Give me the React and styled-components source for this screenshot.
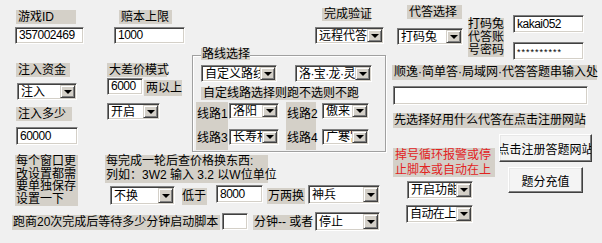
import React from "react";
import styled, { createGlobalStyle } from "styled-components";

const GlobalStyle = createGlobalStyle`
  body { margin: 0; background: #f0f0f0; }
  * { box-sizing: border-box; }
`;

const Window = styled.div`
  width: 602px;
  height: 243px;
  overflow: hidden;
  display: flex;
  background: #f0f0f0;
  font-family: "Liberation Sans", "Noto Sans CJK SC", sans-serif;
  font-size: 12px;
  color: #000;
`;

const LeftArea = styled.div`
  width: 390px;
  flex-shrink: 0;
  display: flex;
  flex-direction: column;
`;

const RightArea = styled.div`
  flex: 1;
  display: flex;
  flex-direction: column;
  align-items: flex-start;
`;

const Row = styled.div`
  display: flex;
  align-items: flex-start;
  flex-shrink: 0;
  margin-top: ${(p) => p.$mt || 0}px;
  margin-left: ${(p) => p.$ml || 0}px;
  height: ${(p) => (p.$h ? p.$h + "px" : "auto")};
`;

const Col = styled.div`
  display: flex;
  flex-direction: column;
  align-items: flex-start;
  flex-shrink: 0;
  margin-top: ${(p) => p.$mt || 0}px;
  margin-left: ${(p) => p.$ml || 0}px;
  width: ${(p) => (p.$w ? p.$w + "px" : "auto")};
`;

const Label = styled.div`
  flex-shrink: 0;
  background: #d4d0c8;
  width: ${(p) => p.$w}px;
  height: ${(p) => p.$h || 14}px;
  line-height: ${(p) => p.$lh || p.$h || 14}px;
  margin-top: ${(p) => p.$mt || 0}px;
  margin-left: ${(p) => p.$ml || 0}px;
  padding-left: ${(p) => (p.$pl === undefined ? 2 : p.$pl)}px;
  white-space: pre;
  color: ${(p) => (p.$red ? "#e2231f" : "#000")};
`;

const sunken = `
  border-top: 1px solid #808080;
  border-left: 1px solid #808080;
  border-bottom: 1px solid #ffffff;
  border-right: 1px solid #ffffff;
  box-shadow: inset 1px 1px 0 #404040, inset -1px -1px 0 #d4d0c8;
`;

const TextBox = styled.div`
  flex-shrink: 0;
  ${sunken}
  background: #fff;
  width: ${(p) => p.$w}px;
  height: ${(p) => p.$h || 17}px;
  margin-top: ${(p) => p.$mt || 0}px;
  margin-left: ${(p) => p.$ml || 0}px;
  padding: 0 0 0 3px;
  display: flex;
  align-items: center;
  font-size: 12px;
  line-height: 13px;
  letter-spacing: -0.5px;
  white-space: nowrap;
`;

const Secret = styled.span`
  font-size: 9px;
  letter-spacing: 1px;
  transform: translateY(1px);
`;

const ComboBox = styled.div`
  flex-shrink: 0;
  ${sunken}
  background: #fff;
  width: ${(p) => p.$w}px;
  height: ${(p) => p.$h || 17}px;
  margin-top: ${(p) => p.$mt || 0}px;
  margin-left: ${(p) => p.$ml || 0}px;
  padding: 1px;
  display: flex;
  align-items: stretch;
`;

const ComboText = styled.div`
  flex: 1;
  min-width: 0;
  padding-left: 2px;
  display: flex;
  align-items: center;
  line-height: 12px;
  letter-spacing: ${(p) => (p.$tight ? "-0.6px" : "0")};
  white-space: nowrap;
  overflow: hidden;
`;

const DropButton = styled.div`
  width: 15px;
  flex-shrink: 0;
  background: #d4d0c8;
  border-top: 1px solid #d4d0c8;
  border-left: 1px solid #d4d0c8;
  border-bottom: 1px solid #404040;
  border-right: 1px solid #404040;
  box-shadow: inset 1px 1px 0 #fff, inset -1px -1px 0 #808080;
  display: flex;
  align-items: center;
  justify-content: center;
`;

const Arrow = styled.div`
  width: 0;
  height: 0;
  border-left: 4px solid transparent;
  border-right: 4px solid transparent;
  border-top: 4px solid #000;
`;

const Combo = ({ children, $tight, ...rest }) => (
  <ComboBox {...rest}>
    <ComboText $tight={$tight}>{children}</ComboText>
    <DropButton>
      <Arrow />
    </DropButton>
  </ComboBox>
);

const GroupBox = styled.div`
  position: relative;
  flex-shrink: 0;
  width: ${(p) => p.$w}px;
  height: ${(p) => p.$h}px;
  margin-top: ${(p) => p.$mt || 0}px;
  border: 1px solid #a0a0a0;
  box-shadow: inset 1px 1px 0 #fff, 1px 1px 0 #fff;
  display: flex;
  flex-direction: column;
  align-items: flex-start;
`;

const Legend = styled.div`
  position: absolute;
  left: 8px;
  top: -8px;
  width: 49px;
  height: 12px;
  line-height: 12px;
  background: #d4d0c8;
  padding-left: 1px;
  white-space: nowrap;
`;

const Button = styled.button`
  flex-shrink: 0;
  width: ${(p) => p.$w}px;
  height: ${(p) => p.$h}px;
  margin: ${(p) => p.$mt || 0}px 0 0 ${(p) => p.$ml || 0}px;
  padding: 0;
  background: #f4f4f4;
  border-top: 1px solid #fff;
  border-left: 1px solid #fff;
  border-bottom: 1px solid #404040;
  border-right: 1px solid #404040;
  box-shadow: inset -1px -1px 0 #808080, inset 1px 1px 0 #e8e8e8;
  font-family: "Liberation Sans", "Noto Sans CJK SC", sans-serif;
  font-size: 12px;
  color: #000;
  display: flex;
  align-items: center;
  justify-content: center;
  white-space: nowrap;
  overflow: hidden;
`;

const RouteRow = styled.div`
  display: flex;
  align-items: flex-start;
  height: 24px;
  margin-left: ${(p) => p.$ml || 0}px;
  margin-top: ${(p) => p.$mt || 0}px;
`;

export default function App() {
  return (
    <>
      <GlobalStyle />
      <Window>
        <LeftArea>
          <Row $h={152}>
            <Col $ml={15} $w={70}>
              <Label $mt={10} $ml={1} $w={60}>游戏ID</Label>
              <TextBox $mt={3} $w={69}>357002469</TextBox>
              <Label $mt={19} $ml={1} $w={54}>注入资金</Label>
              <Combo $mt={6} $ml={2} $w={60}>注入</Combo>
              <Label $mt={7} $ml={1} $w={56}>注入多少</Label>
              <TextBox $mt={6} $ml={1} $w={62} $h={18}>60000</TextBox>
            </Col>
            <Col $ml={22} $w={80}>
              <Label $mt={10} $ml={12} $w={53}>赔本上限</Label>
              <TextBox $mt={3} $ml={7} $w={71}>1000</TextBox>
              <Label $mt={19} $w={60}>大差价模式</Label>
              <Row $mt={1}>
                <TextBox $w={36}>6000</TextBox>
                <Label $mt={2} $ml={1} $w={38} $h={16}>两以上</Label>
              </Row>
              <Combo $mt={7} $w={53}>开启</Combo>
            </Col>
            <Col $ml={5} $w={194}>
              <Label $mt={8} $ml={130} $w={49} $h={13}>完成验证</Label>
              <Combo $mt={6} $ml={123} $w={69}>远程代答</Combo>
              <GroupBox $mt={11} $w={194} $h={97}>
                <Legend>路线选择</Legend>
                <Row $mt={9} $ml={8}>
                  <Combo $w={76}>自定义路线</Combo>
                  <Combo $tight $ml={18} $w={77}>洛·宝·龙·灵</Combo>
                </Row>
                <Label $mt={5} $ml={8} $w={157} $h={13}>自定线路选择则跑不选则不跑</Label>
                <RouteRow $mt={2} $ml={3}>
                  <Label $w={32} $h={24} $pl={1}>线路1</Label>
                  <Combo $mt={1} $ml={1} $w={50} $h={16}>洛阳</Combo>
                  <Label $ml={7} $w={30} $h={24} $pl={1}>线路2</Label>
                  <Combo $mt={1} $ml={6} $w={47} $h={16}>傲来</Combo>
                </RouteRow>
                <RouteRow $ml={3}>
                  <Label $w={32} $h={24} $pl={1}>线路3</Label>
                  <Combo $mt={3} $ml={1} $w={50} $h={16}>长寿村</Combo>
                  <Label $ml={7} $w={30} $h={24} $pl={1}>线路4</Label>
                  <Combo $mt={3} $ml={6} $w={47} $h={16}>广寒宫</Combo>
                </RouteRow>
              </GroupBox>
            </Col>
          </Row>

          <Row $mt={3}>
            <Label $ml={15} $w={63} $h={51} $lh={12.5} $pl={1}>
              {"每个窗口更\n改设置都需\n要单独保存\n设置一下"}
            </Label>
            <Col $ml={27}>
              <Label $w={163} $h={28} $lh={13.5} $pl={1}>
                {"每完成一轮后查价格换东西:\n列如：3W2 输入 3.2 以W位单位"}
              </Label>
              <Row $mt={2}>
                <Combo $mt={1} $ml={5} $w={65} $h={19}>不换</Combo>
                <Label $mt={3} $ml={7} $w={25} $h={17} $pl={0}>低于</Label>
                <TextBox $ml={9} $w={47} $h={18}>8000</TextBox>
                <Label $mt={3} $ml={4} $w={38} $h={16} $pl={1}>万两换</Label>
                <Combo $ml={3} $w={72} $h={19}>神兵</Combo>
              </Row>
            </Col>
          </Row>

          <Row $mt={6}>
            <Label $mt={3} $ml={12} $w={208} $h={15} $pl={1}>跑商20次完成后等待多少分钟启动脚本</Label>
            <TextBox $mt={1} $ml={2} $w={26} $h={17} />
            <Label $mt={3} $ml={5} $w={57} $h={15} $pl={1}>分钟-- 或者</Label>
            <Combo $ml={5} $w={65} $h={19}>停止</Combo>
          </Row>
        </LeftArea>

        <RightArea>
          <Row $h={60}>
            <Col $ml={7} $w={66}>
              <Label $mt={5} $ml={10} $w={55}>代答选择</Label>
              <Combo $mt={9} $w={66}>打码兔</Combo>
            </Col>
            <Label $mt={18} $ml={5} $w={36} $h={39} $lh={13} $pl={0}>
              {"打码兔\n代答账\n号密码"}
            </Label>
            <Col $ml={9} $w={71}>
              <TextBox $mt={15} $w={71} $h={18}>kakai052</TextBox>
              <TextBox $mt={9} $w={71} $h={18}>
                <Secret>**********</Secret>
              </TextBox>
            </Col>
          </Row>
          <Label $mt={5} $ml={2} $w={205} $h={15}>顺逸·简单答·局域网·代答答题串输入处</Label>
          <TextBox $mt={6} $ml={3} $w={195} $h={19} />
          <Label $mt={8} $ml={3} $w={192} $h={15} $pl={1}>先选择好用什么代答在点击注册网站</Label>
          <Row>
            <Col $ml={3} $w={102}>
              <Label $red $mt={20} $w={102} $h={29} $lh={14.5} $pl={2}>
                {"掉号循环报警或停\n止脚本或自动在上"}
              </Label>
              <Combo $mt={4} $ml={14} $w={66} $h={18}>开启功能</Combo>
              <Combo $tight $mt={6} $ml={13} $w={67} $h={18}>自动在上</Combo>
            </Col>
            <Col $ml={4}>
              <Button $mt={6} $w={93} $h={28}>点击注册答题网站</Button>
              <Button $mt={5} $ml={9} $w={75} $h={26}>题分充值</Button>
            </Col>
          </Row>
        </RightArea>
      </Window>
    </>
  );
}
